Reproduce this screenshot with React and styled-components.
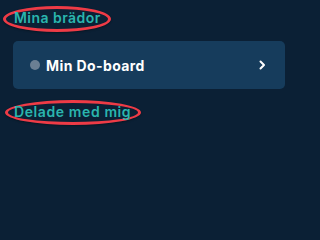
import React from "react";
import styled, { createGlobalStyle } from "styled-components";

const Global = createGlobalStyle`
  html, body { margin: 0; padding: 0; background: #0b2035; }
  body { font-family: "Inter", "Noto Sans", sans-serif; }
`;

const Page = styled.div`
  width: 301px;
  height: 224px;
  background: #0b2035;
  box-sizing: border-box;
  padding: 6px 16px 0 3px;
  display: flex;
  flex-direction: column;
  align-items: flex-start;
`;

const Heading = styled.h2`
  margin: 0;
  margin-left: ${(p) => p.$indent || 0}px;
  display: inline-block;
  box-sizing: border-box;
  height: ${(p) => p.$h}px;
  width: ${(p) => p.$w}px;
  border: 3px solid #ee3b46;
  border-radius: 50%;
  padding-left: ${(p) => p.$pad}px;
  padding-bottom: ${(p) => p.$lift}px;
  font-size: 14px;
  font-weight: 600;
  letter-spacing: ${(p) => p.$ls}px;
  line-height: ${(p) => p.$h - 6 - p.$lift}px;
  color: #2ab5ae;
  white-space: nowrap;
  box-shadow: 0 1px 2px rgba(0, 0, 0, 0.35);
`;

const Card = styled.div`
  margin: 9px 0 11px 10px;
  width: 272px;
  height: 48px;
  box-sizing: border-box;
  background: #163c5c;
  border-radius: 5px;
  display: flex;
  align-items: center;
  padding: 0 19px 0 17px;
`;

const Dot = styled.span`
  width: 10px;
  height: 10px;
  border-radius: 50%;
  background: #6b7f93;
  flex: none;
`;

const Title = styled.span`
  margin-left: 6px;
  flex: 1;
  color: #ffffff;
  font-size: 14px;
  font-weight: 700;
  letter-spacing: 0.4px;
`;

const Chevron = () => (
  <svg width="7" height="10" viewBox="0 0 7 10">
    <path d="M1.5 1.5 L5 5 L1.5 8.5" fill="none" stroke="#fff" strokeWidth="2" strokeLinecap="round" strokeLinejoin="round" />
  </svg>
);

export default function App() {
  return (
    <>
      <Global />
      <Page>
        <Heading $w={108} $h={26} $pad={8} $ls={0.45} $lift={3}>Mina brädor</Heading>
        <Card>
          <Dot />
          <Title>Min Do-board</Title>
          <Chevron />
        </Card>
        <Heading $w={136} $h={25} $pad={6} $indent={2} $ls={0.6} $lift={1}>Delade med mig</Heading>
      </Page>
    </>
  );
}
